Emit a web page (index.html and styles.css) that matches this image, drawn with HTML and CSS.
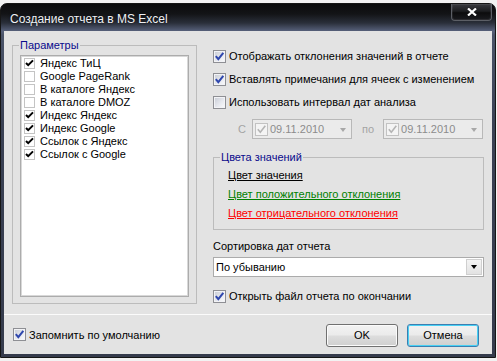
FILE: index.html
```html
<!DOCTYPE html>
<html lang="ru">
<head>
    <meta charset="UTF-8">
    <title>Создание отчета в MS Excel</title>
    <link rel="stylesheet" href="styles.css">
</head>
<body>
    <div class="window">
        <!-- Title bar -->
        <div class="titlebar">
            <span class="title">Создание отчета в MS Excel</span>
            <button class="close-btn" aria-label="Закрыть">
                <svg width="10" height="8" viewBox="0 0 10 8"><path d="M1 0.5 L9 7.5 M9 0.5 L1 7.5" stroke="#fff" stroke-width="2.2" fill="none"/></svg>
            </button>
        </div>

        <div class="client">
            <div class="main">
                <fieldset class="group params">
                    <legend>Параметры</legend>
                    <ul class="checklist">
                        <li><span class="flat-check"><svg viewBox="0 0 11 11"><polyline points="2,5 4.2,7.2 9,2.4" /></svg></span>Яндекс ТиЦ</li>
                        <li><span class="flat-check"></span>Google PageRank</li>
                        <li><span class="flat-check"></span>В каталоге Яндекс</li>
                        <li><span class="flat-check"></span>В каталоге DMOZ</li>
                        <li><span class="flat-check"><svg viewBox="0 0 11 11"><polyline points="2,5 4.2,7.2 9,2.4" /></svg></span>Индекс Яндекс</li>
                        <li><span class="flat-check"><svg viewBox="0 0 11 11"><polyline points="2,5 4.2,7.2 9,2.4" /></svg></span>Индекс Google</li>
                        <li><span class="flat-check"><svg viewBox="0 0 11 11"><polyline points="2,5 4.2,7.2 9,2.4" /></svg></span>Ссылок с Яндекс</li>
                        <li><span class="flat-check"><svg viewBox="0 0 11 11"><polyline points="2,5 4.2,7.2 9,2.4" /></svg></span>Ссылок с Google</li>
                    </ul>
                </fieldset>

                <div class="options">
                    <label class="check-row first">
                        <span class="check"><svg viewBox="0 0 11 11"><path d="M1.8 5.2 L4.3 8.2 L9.3 1.8" /></svg></span>
                        Отображать отклонения значений в отчете
                    </label>
                    <label class="check-row">
                        <span class="check"><svg viewBox="0 0 11 11"><path d="M1.8 5.2 L4.3 8.2 L9.3 1.8" /></svg></span>
                        Вставлять примечания для ячеек с изменением
                    </label>
                    <label class="check-row">
                        <span class="check"></span>
                        Использовать интервал дат анализа
                    </label>

                    <div class="date-row">
                        <span class="date-label">С</span>
                        <div class="date-box">
                            <span class="date-check"><svg viewBox="0 0 11 11"><path d="M1.8 5.2 L4.3 8.2 L9.3 1.8" /></svg></span>
                            <span class="date-text">09.11.2010</span>
                            <span class="date-arrow"></span>
                        </div>
                        <span class="date-label to">по</span>
                        <div class="date-box">
                            <span class="date-check"><svg viewBox="0 0 11 11"><path d="M1.8 5.2 L4.3 8.2 L9.3 1.8" /></svg></span>
                            <span class="date-text">09.11.2010</span>
                            <span class="date-arrow"></span>
                        </div>
                    </div>

                    <fieldset class="group colors">
                        <legend>Цвета значений</legend>
                        <a class="color-link black">Цвет значения</a>
                        <a class="color-link green">Цвет положительного отклонения</a>
                        <a class="color-link red">Цвет отрицательного отклонения</a>
                    </fieldset>

                    <div class="field-label">Сортировка дат отчета</div>
                    <div class="combo">
                        <span class="combo-text">По убыванию</span>
                        <span class="combo-btn"><span class="combo-arrow"></span></span>
                    </div>

                    <label class="check-row open">
                        <span class="check"><svg viewBox="0 0 11 11"><path d="M1.8 5.2 L4.3 8.2 L9.3 1.8" /></svg></span>
                        Открыть файл отчета по окончании
                    </label>
                </div>
            </div>

            <!-- Footer -->
            <div class="footer">
                <label class="check-row">
                    <span class="check"><svg viewBox="0 0 11 11"><path d="M1.8 5.2 L4.3 8.2 L9.3 1.8" /></svg></span>
                    Запомнить по умолчанию
                </label>
                <div class="buttons">
                    <button class="btn">OK</button>
                    <button class="btn default">Отмена</button>
                </div>
            </div>
        </div>
    </div>
</body>
</html>
```

FILE: styles.css
```css
* {
    margin: 0;
    padding: 0;
    box-sizing: border-box;
}

body {
    background: #f2f2f2;
    font-family: 'Liberation Sans', Arial, sans-serif;
    font-size: 11px;
    color: #000;
}

/* Window frame */
.window {
    width: 496px;
    height: 355px;
    margin-top: 3px;
    display: flex;
    flex-direction: column;
    padding: 0 3px 3px 3px;
    border: 1px solid #161616;
    border-radius: 7px 7px 0 0;
    background: linear-gradient(to bottom, #0b0b0c 0px, #131417 10px, #2a2f3a 19px, #56607a 27px, #4b5469 31px, #3a4154 120px, #353b4c 100%);
}

.titlebar {
    height: 27px;
    display: flex;
    justify-content: space-between;
    align-items: flex-start;
}

.title {
    margin: 8px 0 0 6px;
    font-size: 12px;
    line-height: 14px;
    color: #eef0f4;
    text-shadow: 0 0 3px rgba(0, 0, 0, 0.8);
}

.close-btn {
    width: 41px;
    height: 17px;
    display: flex;
    align-items: center;
    justify-content: center;
    border: 1px solid #5c5f66;
    border-top: none;
    border-radius: 0 0 4px 4px;
    background: linear-gradient(to bottom, #3a3b3f 0%, #1c1d20 45%, #0c0c0d 55%, #1a1b1f 100%);
    box-shadow: inset 0 0 0 1px rgba(255, 255, 255, 0.08);
}

.client {
    flex: 1;
    background: #e3e3e3;
    display: flex;
    flex-direction: column;
}

.main {
    height: 283px;
    display: flex;
    padding: 8px 8px 0 8px;
}

/* Group boxes */
.group {
    border: 1px solid #bcbcbc;
    min-width: 0;
}

.group legend {
    margin-left: 6px;
    padding: 0 1px;
    line-height: 13px;
    color: #0a0a8c;
}

.params {
    width: 185px;
    align-self: flex-start;
    padding: 3px 0 6px 0;
}

.checklist {
    list-style: none;
    height: 242px;
    margin: 0 7px;
    background: #fff;
    border: 1px solid #acacac;
    box-shadow: inset 0 0 0 1px #d8d8d8;
    padding-top: 1px;
}

.checklist li {
    height: 13px;
    display: flex;
    align-items: center;
    line-height: 13px;
    white-space: nowrap;
}

.flat-check {
    width: 11px;
    height: 11px;
    margin: 0 5px 0 3px;
    border: 1px solid #c4c4c4;
    background: #fff;
    display: flex;
}

.flat-check svg {
    width: 11px;
    height: 11px;
    margin: -1px;
    fill: none;
    stroke: #000;
    stroke-width: 2;
}

/* Right column */
.options {
    width: 271px;
    margin-left: 16px;
    display: flex;
    flex-direction: column;
}

.check-row {
    height: 16px;
    display: flex;
    align-items: center;
    margin-top: 7px;
    white-space: nowrap;
}

.check-row.first {
    margin-top: 9px;
}

.check-row.open {
    margin-top: 11px;
}

.check {
    width: 13px;
    height: 13px;
    margin-right: 3px;
    flex-shrink: 0;
    display: flex;
    align-items: center;
    justify-content: center;
    border: 1px solid #8e8f94;
    background: linear-gradient(135deg, #c6cad3 0%, #e6e8ee 55%, #fbfbfc 100%);
    box-shadow: inset 0 0 0 1px #f2f3f6;
}

.check svg {
    width: 11px;
    height: 11px;
    fill: none;
    stroke: #2f47ad;
    stroke-width: 2;
}

.date-row {
    height: 20px;
    margin-top: 9px;
    display: flex;
    align-items: center;
    padding-left: 25px;
    color: #a3a3a3;
}

.date-label {
    width: 14px;
}

.date-label.to {
    width: auto;
    margin: 0 9px 0 10px;
}

.date-box {
    width: 100px;
    height: 20px;
    display: flex;
    align-items: center;
    border: 1px solid #b8b8b8;
    background: #ebebeb;
}

.date-check {
    width: 13px;
    height: 13px;
    margin: 0 2px 0 2px;
    display: flex;
    align-items: center;
    justify-content: center;
    border: 1px solid #c2c2c2;
    background: #f4f4f4;
}

.date-check svg {
    width: 11px;
    height: 11px;
    fill: none;
    stroke: #b4b4b4;
    stroke-width: 1.6;
}

.date-text {
    color: #8c8c8c;
}

.date-arrow {
    margin: 1px 5px 0 auto;
    border-left: 3.5px solid transparent;
    border-right: 3.5px solid transparent;
    border-top: 4px solid #a8a8a8;
}

.colors {
    margin-top: 12px;
    padding: 2px 0 6px 0;
}

.color-link {
    display: block;
    margin-left: 14px;
    line-height: 19px;
    text-decoration: underline;
    cursor: pointer;
}

.color-link.black { color: #000; }
.color-link.green { color: #008000; }
.color-link.red { color: #ff0000; }

.field-label {
    margin-top: 10px;
    line-height: 13px;
}

.combo {
    height: 20px;
    margin-top: 4px;
    display: flex;
    align-items: center;
    border: 1px solid #ababab;
    background: #fff;
}

.combo-text {
    flex: 1;
    padding-left: 2px;
}

.combo-btn {
    width: 16px;
    height: 16px;
    margin-right: 1px;
    display: flex;
    align-items: center;
    justify-content: center;
    border: 1px solid #cfcfcf;
    background: linear-gradient(to bottom, #f4f4f4, #e2e2e2);
}

.combo-arrow {
    border-left: 3.5px solid transparent;
    border-right: 3.5px solid transparent;
    border-top: 4px solid #000;
}

/* Footer */
.footer {
    flex: 1;
    display: flex;
    align-items: center;
    justify-content: space-between;
    padding: 0 13px 0 9px;
    border-top: 1px solid #fbfbfb;
}

.footer .check-row {
    margin-top: 0;
}

.buttons {
    display: flex;
    gap: 9px;
    margin-top: 1px;
}

.btn {
    width: 72px;
    height: 23px;
    font-family: 'Liberation Sans', Arial, sans-serif;
    font-size: 11px;
    color: #000;
    border: 1px solid #707070;
    border-radius: 3px;
    background: linear-gradient(to bottom, #f2f2f2 0%, #ebebeb 48%, #dddddd 52%, #cfcfcf 100%);
    box-shadow: inset 0 0 0 1px #fbfbfb;
}

.btn.default {
    border-color: #3c7fb1;
    box-shadow: inset 0 0 0 1px #48d0f4;
}
```
